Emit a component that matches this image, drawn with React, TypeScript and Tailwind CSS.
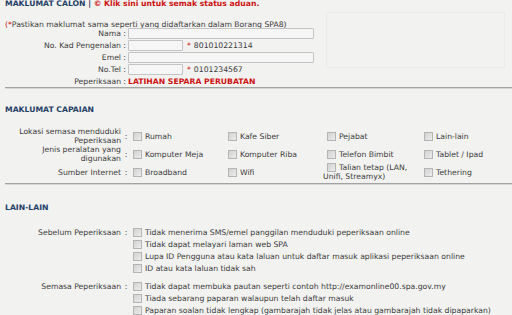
import React from 'react';

const navy = 'text-[#1f3f66]';

const Box = () => (
  <span className="inline-block w-[9px] h-[9px] shrink-0 border border-[#b5b5b5] bg-gradient-to-br from-[#d2d2d2] to-[#ececec]" />
);

const Check = ({ label, className = '' }: { label: React.ReactNode; className?: string }) => (
  <div className={`flex items-center gap-[3px] ${className}`}>
    <Box />
    <span className="whitespace-nowrap">{label}</span>
  </div>
);

const Input = ({ wide }: { wide?: boolean }) => (
  <span
    className={`inline-block h-[11px] border border-[#c4c4c4] bg-[#f6f6f6] rounded-[1px] ${
      wide ? 'w-[186px]' : 'w-[55px]'
    }`}
  />
);

const FormRow = ({ label, children }: { label: string; children: React.ReactNode }) => (
  <div className="flex items-center h-[12px]">
    <span className="w-[121px] text-right">{label}</span>
    <span className="w-[7px] text-center">:</span>
    {children}
  </div>
);

const Rule = () => <div className="ml-[5px] h-[2px] bg-[#a3a3a3] border-b border-[#d6d6d6]" />;

const accessRows = [
  {
    label: ['Lokasi semasa menduduki', 'Peperiksaan'],
    items: ['Rumah', 'Kafe Siber', 'Pejabat', 'Lain-lain'],
  },
  {
    label: ['Jenis peralatan yang', 'digunakan'],
    items: ['Komputer Meja', 'Komputer Riba', 'Telefon Bimbit', 'Tablet / Ipad'],
  },
  {
    label: ['Sumber Internet'],
    items: ['Broadband', 'Wifi', 'TALIAN', 'Tethering'],
  },
];

const before = [
  'Tidak menerima SMS/emel panggilan menduduki peperiksaan online',
  'Tidak dapat melayari laman web SPA',
  'Lupa ID Pengguna atau kata laluan untuk daftar masuk aplikasi peperiksaan online',
  'ID atau kata laluan tidak sah',
];

const during = [
  'Tidak dapat membuka pautan seperti contoh http://examonline00.spa.gov.my',
  'Tiada sebarang paparan walaupun telah daftar masuk',
  'Paparan soalan tidak lengkap (gambarajah tidak jelas atau gambarajah tidak dipaparkan)',
];

const CheckList = ({ label, items }: { label: string; items: string[] }) => (
  <div className="flex">
    <div className="flex items-center h-[12px]">
      <span className="w-[121px] text-right whitespace-nowrap">{label}</span>
      <span className="w-[10px] text-center">:</span>
    </div>
    <div className="flex flex-col pl-[2px]">
      {items.map((t) => (
        <Check key={t} label={t} className="h-[12px]" />
      ))}
    </div>
  </div>
);

export default function App() {
  return (
    <div className="w-[512px] h-[315px] overflow-hidden bg-[#f2f2f0] text-[#3b3b3b] text-[7.7px] leading-[9px] font-['DejaVu_Sans',sans-serif]">
      {/* Maklumat calon */}
      <div className="-mt-[1px] h-[9px] pl-[5px] font-bold whitespace-nowrap">
        <span className={navy}>MAKLUMAT CALON</span>
        <span className={navy}> | </span>
        <span className="text-[#cc1111]">© Klik sini untuk semak status aduan.</span>
      </div>
      <div className="flex mt-[4px]">
        <div className="w-[326px] pt-[8px]">
          <div className="pl-[5px] h-[8px] whitespace-nowrap">
            <span className="text-[#cc1111]">(*</span>Pastikan maklumat sama seperti yang didaftarkan dalam Borang SPA8)
          </div>
          <div className="mt-[-1px]">
            <FormRow label="Nama">
              <Input wide />
            </FormRow>
            <FormRow label="No. Kad Pengenalan">
              <Input />
              <span className="ml-[4px] text-[#cc1111]">*</span>
              <span className="ml-[3px]">801010221314</span>
            </FormRow>
            <FormRow label="Emel">
              <Input wide />
            </FormRow>
            <FormRow label="No.Tel">
              <Input />
              <span className="ml-[4px] text-[#cc1111]">*</span>
              <span className="ml-[3px]">0101234567</span>
            </FormRow>
            <FormRow label="Peperiksaan">
              <span className="font-bold text-[#cc1111]">LATIHAN SEPARA PERUBATAN</span>
            </FormRow>
          </div>
        </div>
        <div className="flex-1 mr-[7px] h-[56px] border border-[#ebebe9]" />
      </div>
      <Rule />

      {/* Maklumat capaian */}
      <div className={`mt-[16px] pl-[5px] h-[9px] font-bold ${navy}`}>MAKLUMAT CAPAIAN</div>
      <div className="mt-[13px]">
        {accessRows.map((row) => (
          <div key={row.label[0]} className="flex items-center h-[18px]">
            <div className="w-[121px] text-right whitespace-nowrap">
              {row.label.map((l) => (
                <div key={l}>{l}</div>
              ))}
            </div>
            <span className="w-[10px] text-center">:</span>
            <div className="grid grid-cols-[95px_99px_97px_88px] pl-[2px]">
              {row.items.map((it) =>
                it === 'TALIAN' ? (
                  <div key={it} className="-ml-[4px] whitespace-nowrap">
                    <div className="flex items-center gap-[3px] pl-[4px]">
                      <Box />
                      <span>Talian tetap (LAN,</span>
                    </div>
                    <div>Unifi, Streamyx)</div>
                  </div>
                ) : (
                  <Check key={it} label={it} />
                )
              )}
            </div>
          </div>
        ))}
      </div>
      <div className="mt-[2px]">
        <Rule />
      </div>

      {/* Lain-lain */}
      <div className={`mt-[18px] pl-[5px] h-[9px] font-bold ${navy}`}>LAIN-LAIN</div>
      <div className="mt-[14px]">
        <CheckList label="Sebelum Peperiksaan" items={before} />
        <div className="mt-[6px]">
          <CheckList label="Semasa Peperiksaan" items={during} />
        </div>
      </div>
    </div>
  );
}
